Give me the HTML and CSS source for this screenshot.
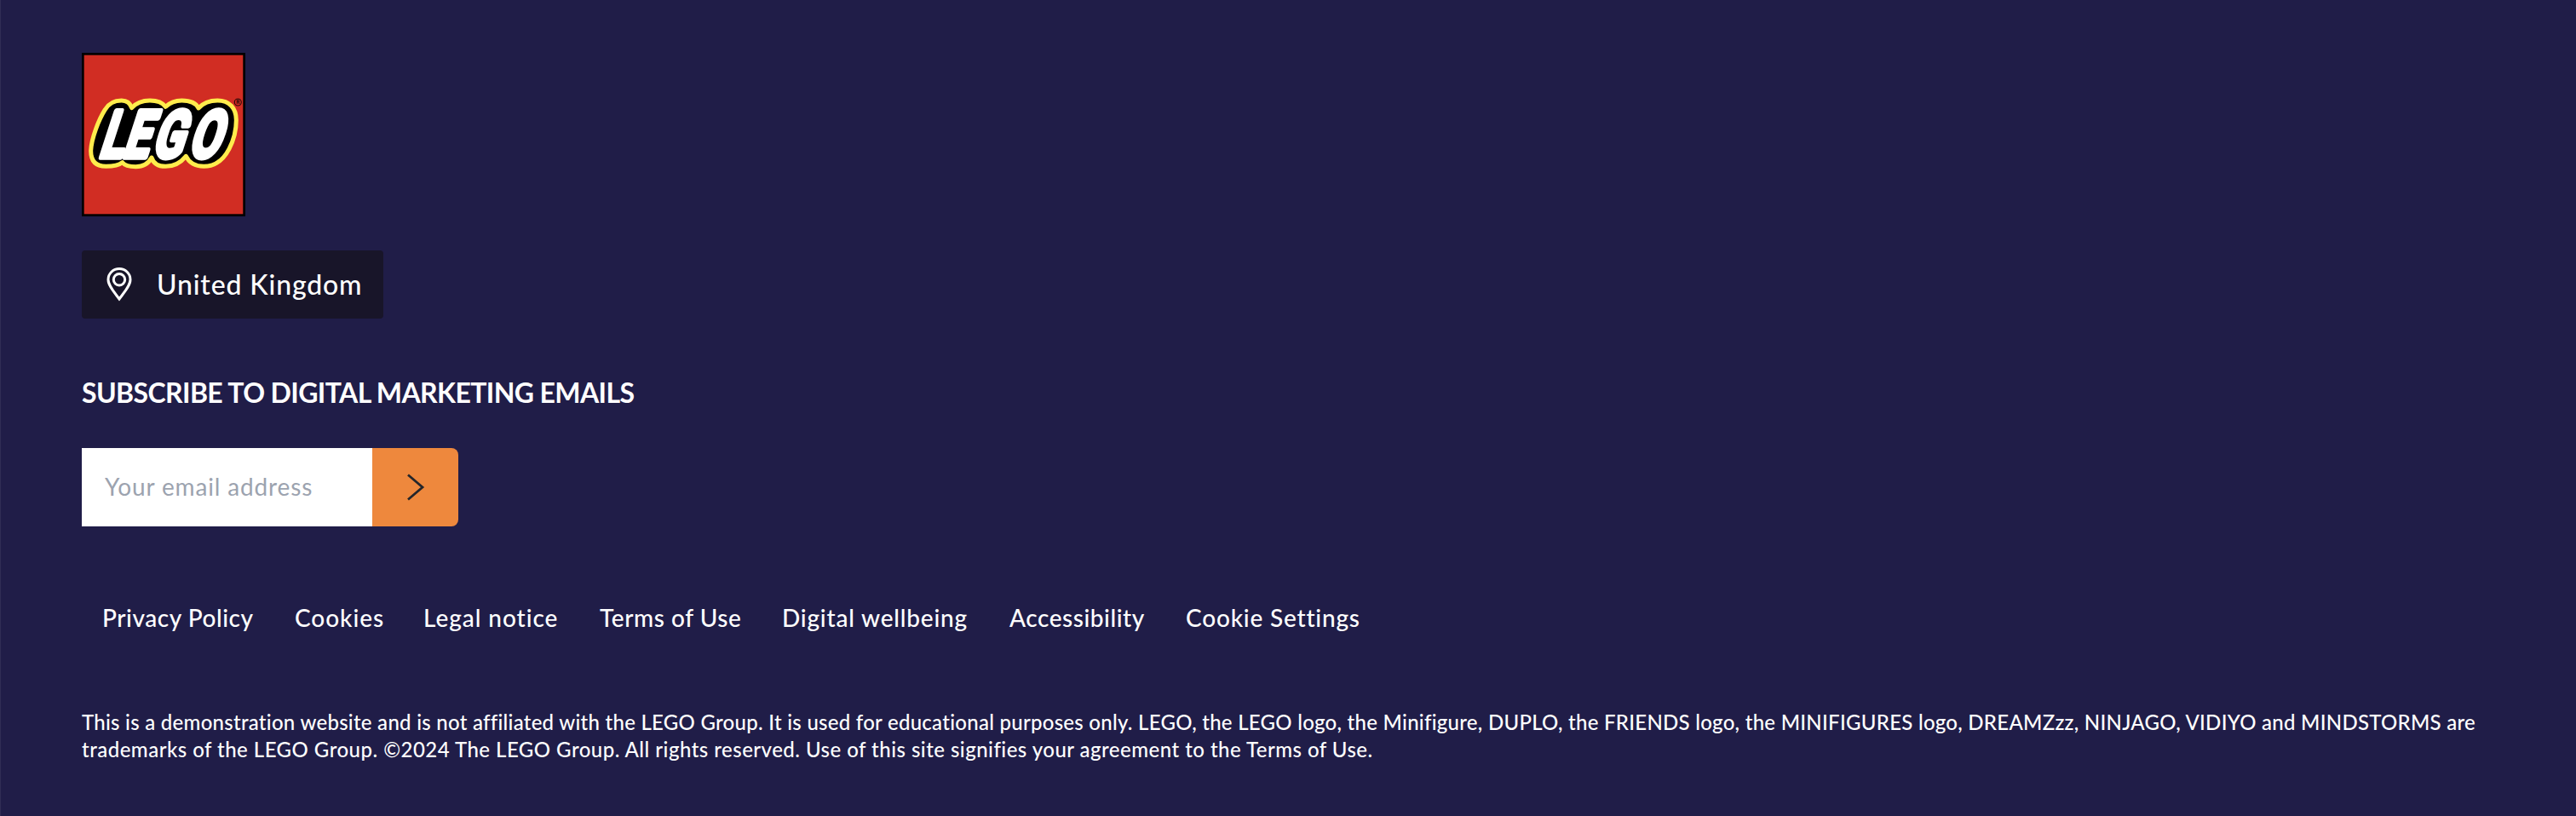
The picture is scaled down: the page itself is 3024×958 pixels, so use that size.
FILE: index.html
```html
<!DOCTYPE html>
<html lang="en">
<head>
<meta charset="utf-8">
<title>LEGO footer</title>
<link rel="stylesheet" href="styles.css">
</head>
<body>
<footer class="footer">
  <svg class="logo" viewBox="0 0 192 192" role="img" aria-label="LEGO">
    <rect width="192" height="192" fill="#000"/>
    <rect x="2.7" y="2.7" width="186.6" height="186.6" fill="#d12d23"/>
    <path class="bubble" transform="scale(.33333)" d="M140 168C155 168 170 176 176 194C192 176 215 168 240 168C262 168 282 172 295 190C312 174 330 168 352 168C380 168 402 176 411 195C430 174 450 168 478 168C520 168 544 195 544 237C544 290 515 400 430 400C400 400 378 388 367 364C350 385 325 400 295 400C270 400 252 390 246 369C235 390 215 401 190 401C165 401 150 395 143 386C130 397 110 400 85 400C50 400 32 382 32 345C34 300 60 235 82 200C95 178 115 168 140 168Z"/>
    <text class="word" transform="translate(19 121.500) skewX(-18) scale(.7 1)" x="0 40 89 150" y="0">LEGO</text>
    <circle cx="183.300" cy="58" r="4" fill="none" stroke="#2a0a08" stroke-width="1.100"/>
    <text class="reg" x="183.300" y="60.400" text-anchor="middle">R</text>
  </svg>
  <button class="country">
    <svg class="pin" viewBox="0 0 30 40"><path d="M15 1.500C7.800 1.500 2 7.200 2 14.200C2 21.500 9.500 29.500 15 37C20.500 29.500 28 21.500 28 14.200C28 7.200 22.200 1.500 15 1.500Z"/><circle cx="15" cy="14.200" r="6.700"/></svg>
    <span>United Kingdom</span>
  </button>
  <h2 class="title">SUBSCRIBE TO DIGITAL MARKETING EMAILS</h2>
  <form class="subscribe">
    <input class="email" type="email" placeholder="Your email address">
    <button class="send" type="button" aria-label="Subscribe"><svg class="chevron" viewBox="0 0 22 32"><path d="M2 1.500L19 16L2 30.500"/></svg></button>
  </form>
  <nav class="links"><a>Privacy Policy</a><a class="loose">Cookies</a><a class="loose">Legal notice</a><a>Terms of Use</a><a class="mid">Digital wellbeing</a><a>Accessibility</a><a class="mid">Cookie Settings</a></nav>
  <p class="legal">This is a demonstration website and is not affiliated with the LEGO Group. It is used for educational purposes only. LEGO, the LEGO logo, the Minifigure, DUPLO, the FRIENDS logo, the MINIFIGURES logo, DREAMZzz, NINJAGO, VIDIYO and MINDSTORMS are<br><span class="wide">trademarks of the LEGO Group. ©2024 The LEGO Group. All rights reserved. Use of this site signifies your agreement to the Terms of Use.</span></p>
</footer>
</body>
</html>
```
FILE: styles.css
```css
* { box-sizing: border-box; }
body { margin: 0; background: #201d48; color: #fff; font-family: Lato, sans-serif; }
.footer { height: 958px; padding: 62px 96px 0; border-left: 1px solid #302d55; padding-left: 95px; display: flex; flex-direction: column; align-items: flex-start; }
.logo { width: 192px; height: 192px; flex: none; }
.bubble { fill: #000; stroke: #ffec4c; stroke-width: 15px; stroke-linejoin: round; }
.word { font-family: Roboto, sans-serif; font-weight: 500; font-size: 75px; fill: #fff; stroke: #fff; stroke-width: 7.500px; stroke-linejoin: round; }
.reg { font: 700 6.500px Roboto, sans-serif; fill: #2a0a08; }
.country { margin-top: 40px; height: 80px; width: 354px; padding: 0 0 1px 29px; border: 0; border-radius: 4px; background: #181529; color: #fff; font: 500 32px/40px Lato, sans-serif; display: flex; align-items: center; gap: 29px; letter-spacing: .850px; white-space: nowrap; }
.pin { width: 30px; height: 40px; fill: none; stroke: #fff; stroke-width: 3px; flex: none; }
.title { margin: 67px 0 0; font-size: 32px; line-height: 40px; font-weight: 700; letter-spacing: -.610px; }
.subscribe { display: flex; margin: 45px 0 0; height: 92px; }
.email { width: 341px; border: 0; border-radius: 0; padding: 0 27px 2px; font: 400 28px Lato, sans-serif; letter-spacing: .850px; background: #fff; }
.email::placeholder { color: #9ca3af; opacity: 1; }
.send { width: 101px; border: 0; border-radius: 0 8px 8px 0; background: #ee883d; display: flex; align-items: center; justify-content: center; padding: 0; }
.chevron { width: 22px; height: 32px; fill: none; stroke: #24262b; stroke-width: 2.800px; }
.links { display: grid; grid-template-columns: 226px 151px 207px 214px 267px 207px auto; padding-left: 24px; margin-top: 87px; font: 500 28px/40px Lato, sans-serif; letter-spacing: .550px; white-space: nowrap; }
.loose { letter-spacing: .950px; }
.mid { letter-spacing: .800px; }
.legal { margin: 87px 0 0; font-size: 24px; line-height: 32px; font-weight: 500; letter-spacing: .265px; white-space: nowrap; }
.wide { letter-spacing: .475px; }
```
